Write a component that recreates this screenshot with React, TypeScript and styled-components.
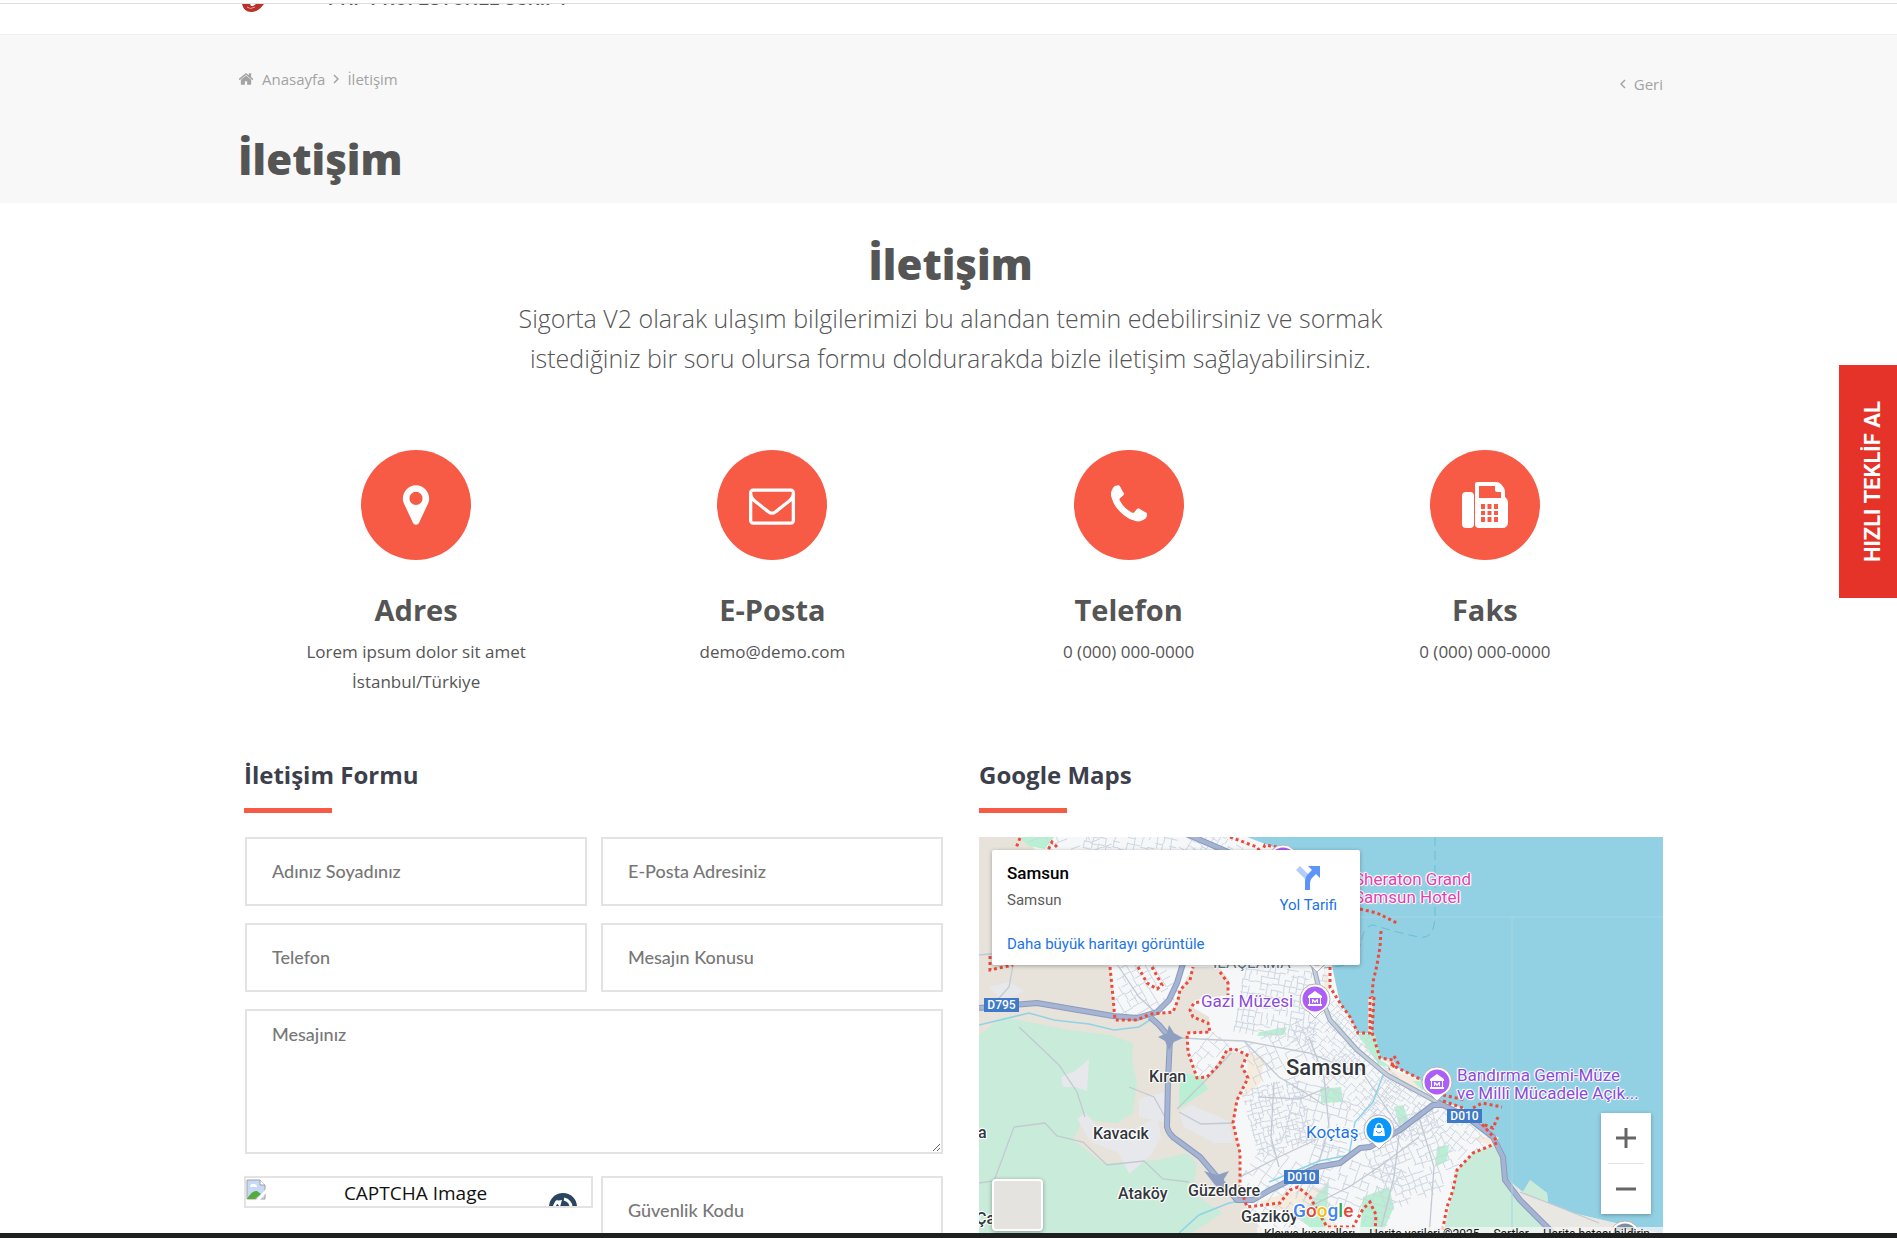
import React from 'react';
import styled, { createGlobalStyle } from 'styled-components';

const exo = `"Open Sans", "Noto Sans", sans-serif`;
const roboto = `Roboto, "Open Sans", sans-serif`;
const lato = `Lato, "Open Sans", sans-serif`;
const accent = '#f75b45';

const GlobalStyle = createGlobalStyle`
  *, *::before, *::after { box-sizing: border-box; }
  body { margin: 0; background: #fff; color: #555; font-family: ${exo}; }
  h1, h2, h3, p, ol, ul { margin: 0; padding: 0; }
  a { color: inherit; text-decoration: none; }
`;

const Shell = styled.div`
  display: flex;
  flex-direction: column;
  height: 100vh;
  overflow: hidden;
`;

const Page = styled.div`
  flex: 1;
  min-height: 0;
  overflow: hidden;
`;

const BottomBar = styled.footer`
  flex: none;
  height: 5px;
  background: #1e201f;
`;

const Container = styled.div`
  width: 100%;
  max-width: 1429px;
  margin: 0 auto;
  padding-left: 4px;
`;

/* Header */

const HeaderBar = styled.header`
  height: 35px;
  padding-top: 3px;
  border-bottom: 1px solid #efefef;
`;

const HeaderClip = styled.div`
  height: 12px;
  border-top: 1px solid #dedede;
  overflow: hidden;
`;

const Brand = styled.a`
  display: flex;
  align-items: flex-start;
  padding-left: 4px;
`;

const Slogan = styled.span`
  height: 2px;
  margin-left: 64px;
  overflow: hidden;
  display: flex;
  align-items: flex-end;
  color: #555;
  font: 500 19px/26px ${roboto};
  & > span { margin-bottom: -6px; }
`;

/* Title band */

const Band = styled.section`
  height: 168px;
  background: #f8f8f8;
`;

const BandTop = styled.div`
  display: flex;
  justify-content: space-between;
  padding-top: 32px;
  color: #a3a3a3;
  font-size: 15px;
  line-height: 24px;
`;

const Crumbs = styled.ol`
  display: flex;
  align-items: center;
  gap: 8px;
  height: 24px;
  list-style: none;
  li, a { display: flex; align-items: center; gap: 8px; }
`;

const Back = styled.a`
  display: flex;
  align-items: center;
  gap: 8px;
  padding-top: 5px;
`;

const BigTitle = styled.h1<{ $center?: boolean }>`
  color: #555;
  font-size: 42px;
  font-weight: 800;
  line-height: 60px;
  text-align: ${(p) => (p.$center ? 'center' : 'left')};
`;

const BandTitle = styled.div`
  padding-top: 33px;
`;

/* Intro */

const Intro = styled.section`
  padding-top: 31px;
  text-align: center;
`;

const Lead = styled.p`
  max-width: 940px;
  margin: 0 auto;
  padding-top: 4px;
  color: #555;
  font-size: 25px;
  font-weight: 300;
  line-height: 40px;
`;

const Contacts = styled.ul`
  display: grid;
  grid-template-columns: repeat(4, 1fr);
  padding-top: 72px;
  list-style: none;
`;

const Contact = styled.li`
  display: flex;
  flex-direction: column;
  align-items: center;
  min-height: 309px;
  text-align: center;
`;

const Disc = styled.span`
  display: grid;
  place-items: center;
  width: 110px;
  height: 110px;
  border-radius: 50%;
  background: ${accent};
  color: #fff;
`;

const ContactTitle = styled.h2`
  padding-top: 30px;
  font-size: 29px;
  font-weight: 700;
  line-height: 40px;
`;

const ContactText = styled.p`
  padding-top: 7px;
  font-size: 17px;
  line-height: 30px;
`;

/* Form and map */

const Columns = styled.div`
  display: grid;
  grid-template-columns: 705fr 684fr;
  gap: 36px;
`;

const FormColumn = styled.section`
  padding-left: 6px;
`;

const MapColumn = styled.section``;

const SectionTitle = styled.h2`
  margin-bottom: 24px;
  color: #3d3f4c;
  font-size: 24px;
  font-weight: 700;
  line-height: 32px;
  &::after {
    content: '';
    display: block;
    width: 88px;
    height: 5px;
    margin-top: 17px;
    background: ${accent};
  }
`;

const Form = styled.form`
  display: grid;
  grid-template-columns: 1fr 1fr;
  column-gap: 14px;
  row-gap: 17px;
  padding-left: 1px;
`;

const fieldStyle = `
  display: block;
  width: 100%;
  border: 2px solid #e3e3e3;
  border-radius: 0;
  background: #fff;
  color: #333;
  font-family: ${lato};
  font-size: 18px;
  font-weight: 500;
  outline: none;
  &::placeholder { color: #777; opacity: 1; }
`;

const Field = styled.input`
  ${fieldStyle}
  height: 69px;
  padding: 0 25px 2px;
`;

const Message = styled.textarea`
  ${fieldStyle}
  grid-column: 1 / -1;
  height: 145px;
  margin-bottom: 5px;
  padding: 10px 25px;
  line-height: 26px;
  resize: vertical;
`;

const Captcha = styled.div`
  display: flex;
  align-items: flex-start;
  justify-content: space-between;
  height: 32px;
  margin: 0 -6px 0 -1px;
  padding-right: 14px;
  border: 2px solid #e3e3e3;
  overflow: hidden;
  color: #111;
  font-size: 19px;
  line-height: 30px;
`;

const CaptchaText = styled.span`
  flex: 1;
  padding-left: 16px;
  text-align: center;
`;

const Refresh = styled.button`
  display: block;
  margin: 0;
  padding: 15px 0 0;
  border: 0;
  background: none;
`;

const MapFrame = styled.div`
  position: relative;
  height: 404px;
  overflow: hidden;
  background: #92d0e3;
  font-family: ${roboto};
`;

const MapDrawing = styled.svg`
  display: block;
  width: 100%;
  height: 404px;
`;

const halo = '1px 0 1px #fff, -1px 0 1px #fff, 0 1px 1px #fff, 0 -1px 1px #fff, 1px 1px 1px #fff, -1px -1px 1px #fff';

const Place = styled.span<{ $x: number; $y: number; $color?: string; $size?: number; $weight?: number }>`
  position: absolute;
  left: ${(p) => p.$x}px;
  top: ${(p) => p.$y}px;
  color: ${(p) => p.$color ?? '#33373c'};
  font-size: ${(p) => p.$size ?? 17}px;
  font-weight: ${(p) => p.$weight ?? 500};
  line-height: 18px;
  white-space: pre;
  text-shadow: ${halo};
`;

const Shield = styled.span<{ $x: number; $y: number }>`
  position: absolute;
  left: ${(p) => p.$x}px;
  top: ${(p) => p.$y}px;
  width: 35px;
  height: 14px;
  background: #3f7ac8;
  color: #fff;
  font-size: 12px;
  font-weight: 500;
  line-height: 14px;
  text-align: center;
`;

const GoogleMark = styled.a`
  position: absolute;
  left: 314px;
  top: 361px;
  font-size: 19px;
  font-weight: 500;
  line-height: 26px;
  text-shadow: ${halo};
  span:nth-child(3n + 1) { color: #4285f4; }
  span:nth-child(3n + 2) { color: #ea4335; }
  span:nth-child(3) { color: #fbbc05; }
  span:nth-child(5) { color: #34a853; }
  span:nth-child(6) { color: #ea4335; }
`;

const Attribution = styled.div`
  position: absolute;
  right: 0;
  bottom: 0;
  display: flex;
  gap: 14px;
  height: 14px;
  padding: 0 13px 0 7px;
  background: rgba(245, 245, 245, 0.75);
  color: #111;
  font-size: 12px;
  line-height: 15px;
  white-space: nowrap;
`;

const PlaceCard = styled.div`
  position: absolute;
  left: 13px;
  top: 13px;
  display: flex;
  justify-content: space-between;
  width: 368px;
  height: 115px;
  padding: 12px 23px 10px 15px;
  border-radius: 2px;
  background: #fff;
  box-shadow: 0 1px 4px rgba(0, 0, 0, 0.3);
  color: #5b5b5b;
  font-size: 15px;
  line-height: 22px;
`;

const CardText = styled.div`
  display: flex;
  flex-direction: column;
  a { margin-top: auto; }
`;

const CardTitle = styled.strong`
  margin-bottom: 5px;
  color: #000;
  font-size: 17px;
  font-weight: 500;
`;

const CardLink = styled.a`
  color: #1a73e8;
`;

const Directions = styled(CardLink)`
  display: flex;
  flex-direction: column;
  align-items: center;
  padding-top: 4px;
  gap: 4px;
`;

const ZoomControl = styled.div`
  position: absolute;
  right: 12px;
  top: 276px;
  width: 50px;
  height: 101px;
  padding: 0 7px;
  background: #fff;
  box-shadow: 0 1px 4px rgba(0, 0, 0, 0.3);
`;

const ZoomButton = styled.button`
  display: grid;
  place-items: center;
  width: 100%;
  height: 50px;
  padding: 0;
  border: 0;
  background: none;
  & + & { border-top: 1px solid #e2e2e2; }
`;

const LayerButton = styled.button`
  position: absolute;
  left: 13px;
  top: 342px;
  width: 51px;
  height: 52px;
  border: 2px solid #fff;
  border-radius: 4px;
  background: #e5e3df;
  box-shadow: 0 1px 4px rgba(0, 0, 0, 0.35);
`;

const QuoteTab = styled.button`
  position: fixed;
  right: 0;
  top: 365px;
  display: flex;
  align-items: center;
  justify-content: center;
  width: 58px;
  height: 233px;
  padding: 0 0 0 10px;
  border: 0;
  background: #e5332a;
  color: #fff;
  font: 700 22px/26px ${roboto};
  span { writing-mode: vertical-rl; transform: rotate(180deg); }
`;

/* Icons on the 1792-unit grid */

const glyphs = {
  home: 'M1472 992v480q0 26-19 45t-45 19h-384v-384h-256v384h-384q-26 0-45-19t-19-45v-480q0-1 .5-3t.5-3l575-474 575 474q1 2 1 6zm223-69l-62 74q-8 9-21 11h-3q-13 0-21-7l-692-577-692 577q-12 8-24 7-13-2-21-11l-62-74q-8-10-7-23.500t11-21.500l719-599q32-26 76-26t76 26l244 204v-195q0-14 9-23t23-9h192q14 0 23 9t9 23v408l219 182q10 8 11 21.500t-7 23.500z',
  marker: 'M1152 640q0-106-75-181t-181-75-181 75-75 181 75 181 181 75 181-75 75-181zm256 0q0 109-33 179l-364 774q-16 33-47.500 52t-67.500 19-67.500-19-46.500-52l-365-774q-33-70-33-179 0-212 150-362t362-150 362 150 150 362z',
  mail: 'M1664 1504v-768q-32 36-69 66-268 206-426 338-51 43-83 67t-86.500 48.500-102.500 24.500h-2q-48 0-102.500-24.500t-86.500-48.500-83-67q-158-132-426-338-37-30-69-66v768q0 13 9.500 22.500t22.500 9.500h1472q13 0 22.500-9.500t9.500-22.500zm0-1051v-24.500l-.5-13-3-12.500-5.500-9-9-7.500-14-2.500h-1472q-13 0-22.500 9.500t-9.500 22.500q0 168 147 284 193 152 401 317 6 5 35 29.500t46 37.500 44.500 31.500 50.500 27.500 43 9h2q20 0 43-9t50.500-27.500 44.500-31.500 46-37.500 35-29.500q208-165 401-317 54-43 100.500-115.500t46.500-131.500zm128-37v1088q0 66-47 113t-113 47h-1472q-66 0-113-47t-47-113v-1088q0-66 47-113t113-47h1472q66 0 113 47t47 113z',
  phone: 'M1600 1240q0 27-10 70.500t-21 68.500q-21 50-122 106-94 51-186 51-27 0-53-3.500t-57.500-12.500-47-14.500-55.500-20.500-49-18q-98-35-175-83-127-79-264-216t-216-264q-48-77-83-175-3-9-18-49t-20.500-55.500-14.500-47-12.500-57.500-3.500-53q0-92 51-186 56-101 106-122 25-11 68.500-21t70.500-10q14 0 21 3 18 6 53 76 11 19 30 54t35 63.500 31 53.500q3 4 17.500 25t21.500 35.500 7 28.500q0 20-28.500 50t-62 55-62 53-28.500 46q0 9 5 22.500t8.500 20.500 14 24 11.500 19q76 137 174 235t235 174q2 1 19 11.500t24 14 20.500 8.500 22.500 5q18 0 46-28.500t53-62 55-62 50-28.500q14 0 28.500 7t35.500 21.500 25 17.500q25 15 53.500 31t63.500 35 54 30q70 35 76 53 3 7 3 21z',
};

const Glyph = ({ name, size }: { name: keyof typeof glyphs; size: number }) => (
  <svg width={size} height={size} viewBox="0 0 1792 1792" fill="currentColor" aria-hidden="true">
    <path d={glyphs[name]} />
  </svg>
);

const FaxIcon = () => (
  <svg width="46" height="46" viewBox="0 0 46 46" fill="currentColor" aria-hidden="true">
    <rect x="0" y="10" width="12" height="36" rx="4" />
    <path
      fillRule="evenodd"
      d="M15 0h19q3 0 5 2l3 4q1 2 1 4v5q3 2 3 6v19q0 6-6 6H17q-4 0-4-4V2q0-2 2-2zM17 4v12h22v-6h-4q-2 0-2-2V4zM19 22v5h4v-5zM25.500 22v5h4v-5zM32 22v5h4v-5zM19 29v4h4v-4zM25.500 29v4h4v-4zM32 29v4h4v-4zM19 35v5h4v-5zM25.500 35v5h4v-5zM32 35v5h4v-5z"
    />
  </svg>
);

const Chevron = ({ left }: { left?: boolean }) => (
  <svg width="6" height="10" viewBox="0 0 6 10" fill="none" stroke="currentColor" strokeWidth="1.5" aria-hidden="true">
    <path d={left ? 'M5 1L1 5l4 4' : 'M1 1l4 4-4 4'} />
  </svg>
);

const LogoTail = () => (
  <svg width="22" height="9" viewBox="0 0 22 9" aria-hidden="true">
    <path d="M0 0h8l1 2h2l3-2h8q-3 4-6 6-3 2-7 2Q2 8 0 0z" fill="#b9312b" />
    <path d="M5 3Q8 6 13 3" fill="none" stroke="#e9a29c" />
  </svg>
);

const BrokenImage = () => (
  <svg width="20" height="22" viewBox="0 0 20 22" aria-hidden="true">
    <path d="M1 2h13l5 5v14H1z" fill="#c6d9f7" stroke="#a2a2a2" />
    <path d="M1 21q5-9 10-8l4 3-6 5z" fill="#57ab3b" />
    <path d="M4 8q1-3 4-2 3 0 3 3H4z" fill="#fff" />
    <path d="M14 2v5h5" fill="#fff" stroke="#a2a2a2" />
    <path d="M10 22L20 11v4l-6 7z" fill="#fff" />
  </svg>
);

const RefreshIcon = () => (
  <svg width="28" height="28" viewBox="0 0 28 28" aria-hidden="true">
    <circle cx="14" cy="14" r="14" fill="#2b4560" />
    <path d="M6 18A8.500 8.500 0 0 1 9 8M15 6a8.500 8.500 0 0 1 7 9" fill="none" stroke="#fff" strokeWidth="3" />
    <path d="M6 8l7-1-2 7zM18 16h8l-4 5z" fill="#fff" />
  </svg>
);

/* Map */

const coast =
  'M268 0L280 10L300 12L330 60L351 110L351 150L361 166L371 180L379 196H389V160H394L393 195L401 221L414 223L419 231L441 243L458 263L484 271L501 286L518 300L523 316L526 340L544 355L551 343L568 356L569 366L594 376L631 385L684 397';
const city =
  'M45 0H268L300 12L351 120L361 166L379 196L394 196L401 221L441 243L458 263L484 271L518 300L520 306L494 316L478 333L474 353L463 404H290L268 370L261 350L261 316L254 286L258 263L269 241L263 230L268 218L248 213L228 240L218 241L209 220L208 196L231 196L230 180L213 170L216 163L249 158L250 143L240 130H214L201 153L194 175L171 177L136 183L131 130L80 40Z';

const limits = [
  'M41 1L37 11M78 10L73 5L69 13M251 0L278 10L282 16L286 8L310 12L312 18',
  'M11 119V133L34 128M159 130L168 146L178 152L183 148L173 130',
  'M131 130L134 160L136 183L158 183L171 177L194 175L199 163L201 153L211 143L214 130',
  'M241 135L249 146L249 158M226 164L215 166L211 173L214 180L229 186L231 195L208 196L209 215L218 241L228 240L240 228L248 213L256 212L268 218L263 230L269 241L258 263L254 286L261 316L261 350L268 370L301 366L311 353L319 350L331 360L340 376L348 390L374 390L384 372L391 365L397 378L396 396',
  'M351 130V150L361 166L371 180L379 196H391V160M395 160L393 195L401 221L414 223L413 228L419 231L441 242',
  'M402 94L401 110L398 128L394 145L393 160M381 72L398 76L418 86M415 219L419 226L410 232',
  'M464 258L486 263M464 264L484 271M494 271L503 266L523 270M519 280L514 291L503 287L518 304M518 306L494 316L478 333L474 353L468 370L463 396',
];

const highways = [
  'M0 171L58 166L134 179L158 181L178 175L190 163L198 146L206 120',
  'M171 180L180 188L191 201L189 243L188 290Q190 298 198 303L221 320L238 340L258 363H274L291 353L338 330L361 326L381 311L391 310L421 293L454 268H466',
  'M205 -4L270 24',
  'M458 265L488 280L514 300L524 320L526 343L541 363L582 404',
];

const boulevard = 'M330 110L342 160L351 183L378 213L408 238L458 265';

const lanes =
  'M0 346L15 344L35 290L66 286L78 299L104 305L128 328L165 324L184 342L210 345M40 190L80 228L98 255L106 280M198 272L230 240L252 216M203 201L240 203L265 204L300 240L325 255L345 268M200 275L222 287L255 286M261 340L300 320L330 306L360 290M140 130L160 160L176 175M265 204L330 216L370 232M300 400L330 370L370 350L400 330L440 300M330 200L345 240L350 290L340 325M295 245L292 300L300 330M280 260L320 262L350 250M0 118L35 115L75 100M34 128L30 150L12 170M150 250L175 260L186 280M376 225L400 260L420 290M420 298L415 340L400 400M440 280L455 330L450 400M541 355L580 370L620 386';

type District = [number, number, number, number, number, number];
const districts: District[] = [
  [150, 10, 90, 50, 12, 7], [235, 10, 60, 40, 30, 6], [95, 20, 80, 60, -20, 10], [160, 145, 60, 60, 60, 8],
  [300, 165, 80, 70, 10, 6], [300, 215, 70, 40, -25, 8], [355, 205, 60, 60, 45, 5], [380, 245, 70, 60, 42, 6],
  [340, 280, 60, 60, 15, 8], [300, 280, 60, 70, -15, 5], [420, 275, 70, 50, 35, 5], [430, 320, 80, 80, -20, 7],
  [370, 345, 90, 60, 20, 8], [300, 355, 80, 70, 35, 9], [480, 295, 50, 40, 40, 7], [240, 225, 50, 40, 40, 9],
];

const streetPath = ([cx, cy, w, h, angle, step]: District, seed: number) => {
  let state = seed * 7919 + 17;
  const rand = () => {
    state = (state * 16807) % 2147483647;
    return state / 2147483647;
  };
  const cos = Math.cos((angle * Math.PI) / 180);
  const sin = Math.sin((angle * Math.PI) / 180);
  const at = (x: number, y: number) =>
    `${(cx + x * cos - y * sin).toFixed(1)} ${(cy + x * sin + y * cos).toFixed(1)}`;
  let d = '';
  for (let x = -w / 2; x < w / 2; x += step) {
    for (let y = -h / 2; y < h / 2; y += step) {
      const j = rand() * 2;
      if (rand() > 0.3) d += `M${at(x, y + j)}L${at(x + step, y + j)}`;
      if (rand() > 0.3) d += `M${at(x + j, y)}L${at(x + j, y + step)}`;
    }
  }
  return d;
};

const streets = districts.map(streetPath).join('');

const Pin = ({ x, y, color, bag }: { x: number; y: number; color: string; bag?: boolean }) => (
  <g transform={`translate(${x} ${y})`}>
    <path d="M0 19Q-3 16-6 13Q-15 9-15 0A15 15 0 0 1 15 0Q15 9 6 13Q3 16 0 19z" fill="#fff" stroke="#b9b4ba" />
    <circle r="12.500" fill={color} />
    {bag ? (
      <>
        <path d="M-5-2H5L6 6H-6z" fill="#fff" />
        <path d="M-3-2V-4Q0-9 3-4V-2" fill="none" stroke="#fff" strokeWidth="1.500" />
        <path d="M-3 1Q0 5 3 1" fill="none" stroke={color} />
      </>
    ) : (
      <path d="M-7-3L0-8L7-3V-1H6V5H7V7H-7V5H-6V-1H-7zM-5-1V5H5V-1zM-3 4V0H-2L0 2L2 0H3V4H2V2L0 4L-2 2V4z" fill="#fff" fillRule="evenodd" />
    )}
  </g>
);

const SamsunMap = () => (
  <MapDrawing viewBox="0 0 684 404" preserveAspectRatio="xMinYMin slice" role="img" aria-label="Samsun haritası">
    <defs>
      <clipPath id="cityArea"><path d={city} /></clipPath>
    </defs>
    <rect width="2000" height="404" fill="#92d0e3" />
    <path d={`${coast}V404H0V0Z`} fill="#e7e3db" />
    <path d="M41 0L54 10L76 4V0ZM0 198L24 180L91 193L131 198L154 206L153 223L158 246L154 276L138 286L104 283L94 303L124 326L178 323L208 316L218 326L214 356L244 376L200 404H0Z" fill="#c9ebd9" />
    <path d="M82 240L96 234L110 222L108 254L96 250L84 250ZM98 282L106 276L120 290L155 292L178 280L182 300L172 318L150 337L140 316L112 305ZM10 150L30 145L45 154L25 165ZM160 262L186 255V285L160 280ZM200 275L212 268L250 284L254 306L235 306L205 290Z" fill="#e7e8ec" />
    <path d={city} fill="#f6f7f8" />
    <path d="M40 0H75L66 12L50 9Z" fill="#b9efd2" />
    <path d="M268 216L285 220L282 245L263 262L269 241ZM405 230L441 243L440 254L415 245ZM361 400L280 365L310 355L345 350ZM490 300L520 300L515 310ZM345 130L352 150L345 160Z" fill="#f5ecdd" />
    <path d="M201 235L222 240L229 252L200 272ZM342 252L362 250L364 265L342 266ZM415 270L424 268L430 284L420 288ZM378 197L396 197L402 223L414 231L400 228ZM280 195L308 190L305 198L278 199ZM355 180L378 212L370 210ZM458 310L470 308L468 324L456 330ZM384 360L410 350L415 370L400 404H380ZM320 380L350 345L345 404ZM434 244L444 244V254Z" fill="#b9efd2" />
    <path d="M520 306L494 316L478 333L474 353L463 404H600L545 365L527 345L524 320ZM544 355L551 343L568 356L569 366Z" fill="#c9ebd9" />
    <path d="M526 343L544 355L594 376L684 397V404H590L541 363Z" fill="#e9e7e2" />
    <g clipPath="url(#cityArea)">
      <path d={streets} fill="none" stroke="#cdd6e1" strokeWidth="1" />
    </g>
    <path d={lanes} fill="none" stroke="#c3c9d3" strokeWidth="1.300" />
    <path d="M0 188L50 176L75 183L110 187L135 193L160 190L171 183M404 238L394 265L376 285L370 318L340 324L290 345M200 396L220 378L250 366L262 364" fill="none" stroke="#8fd3e6" strokeWidth="1.500" />
    <path d={boulevard} fill="none" stroke="#9aa7bd" strokeWidth="5" />
    <path d={boulevard} fill="none" stroke="#c5cedb" strokeWidth="3" />
    {highways.map((d) => <path key={d} d={d} fill="none" stroke="#8b9bbd" strokeWidth="6" strokeLinejoin="round" />)}
    {highways.map((d) => <path key={d} d={d} fill="none" stroke="#a5b4d2" strokeWidth="4" strokeLinejoin="round" />)}
    <path d="M179 200L188 196L190 188L195 196L204 201L195 205L190 213L186 204ZM225 334L238 338L250 334L245 342L246 356L236 348Z" fill="#8f9fc1" />
    <path d="M456 0V80Q455 103 440 100Q420 96 394 88Q388 88 384 98Q378 124 368 128L345 131" fill="none" stroke="#6bbdd8" strokeDasharray="9 5" />
    <path d="M381 80H2000M533 80V404" stroke="#a5d7e5" />
    {limits.map((d) => <path key={d} d={d} fill="none" stroke="#ee4a3c" strokeWidth="3" strokeDasharray="3 3" />)}
    <Pin x={304} y={23} color="#a85cf5" />
    <Pin x={338} y={116} color="#7b8794" />
    <Pin x={336} y={162} color="#ab5ff7" />
    <Pin x={458} y={245} color="#ab5ff7" />
    <Pin x={400} y={293} color="#0a96fb" bag />
    <Pin x={646} y={399} color="#7d8f9c" />
  </MapDrawing>
);

const contacts = [
  { title: 'Adres', lines: ['Lorem ipsum dolor sit amet', 'İstanbul/Türkiye'], icon: <Glyph name="marker" size={46} /> },
  { title: 'E-Posta', lines: ['demo@demo.com'], icon: <Glyph name="mail" size={46} /> },
  { title: 'Telefon', lines: ['0 (000) 000-0000'], icon: <Glyph name="phone" size={46} /> },
  { title: 'Faks', lines: ['0 (000) 000-0000'], icon: <FaxIcon /> },
];

const purple = '#8a4bdc';

export default function App() {
  return (
    <Shell>
      <GlobalStyle />
      <Page>
        <HeaderBar>
          <HeaderClip>
            <Container>
              <Brand href="#">
                <LogoTail />
                <Slogan><span>PHP PROFESYONEL SCRIPT</span></Slogan>
              </Brand>
            </Container>
          </HeaderClip>
        </HeaderBar>

        <Band>
          <Container>
            <BandTop>
              <nav>
                <Crumbs>
                  <li><a href="#"><Glyph name="home" size={16} />Anasayfa</a></li>
                  <li><Chevron />İletişim</li>
                </Crumbs>
              </nav>
              <Back href="#"><Chevron left />Geri</Back>
            </BandTop>
            <BandTitle><BigTitle>İletişim</BigTitle></BandTitle>
          </Container>
        </Band>

        <Container>
          <Intro>
            <BigTitle as="h2" $center>İletişim</BigTitle>
            <Lead>
              Sigorta V2 olarak ulaşım bilgilerimizi bu alandan temin edebilirsiniz ve sormak<br />
              istediğiniz bir soru olursa formu doldurarakda bizle iletişim sağlayabilirsiniz.
            </Lead>
          </Intro>

          <Contacts>
            {contacts.map((c) => (
              <Contact key={c.title}>
                <Disc>{c.icon}</Disc>
                <ContactTitle>{c.title}</ContactTitle>
                <ContactText>
                  {c.lines.map((line, i) => (
                    <React.Fragment key={line}>{i > 0 && <br />}{line}</React.Fragment>
                  ))}
                </ContactText>
              </Contact>
            ))}
          </Contacts>

          <Columns>
            <FormColumn>
              <SectionTitle>İletişim Formu</SectionTitle>
              <Form>
                <Field aria-label="Adınız Soyadınız" placeholder="Adınız Soyadınız" />
                <Field type="email" aria-label="E-Posta Adresiniz" placeholder="E-Posta Adresiniz" />
                <Field type="tel" aria-label="Telefon" placeholder="Telefon" />
                <Field aria-label="Mesajın Konusu" placeholder="Mesajın Konusu" />
                <Message aria-label="Mesajınız" placeholder="Mesajınız" />
                <Captcha>
                  <BrokenImage />
                  <CaptchaText>CAPTCHA Image</CaptchaText>
                  <Refresh type="button" aria-label="Kodu yenile"><RefreshIcon /></Refresh>
                </Captcha>
                <Field aria-label="Güvenlik Kodu" placeholder="Güvenlik Kodu" />
              </Form>
            </FormColumn>

            <MapColumn>
              <SectionTitle>Google Maps</SectionTitle>
              <MapFrame>
                <SamsunMap />
                <Place $x={375} $y={33} $color="#e43fb4" $weight={400}>{'Sheraton Grand\nSamsun Hotel'}</Place>
                <Place $x={234} $y={117} $color="#5d7686" $size={16} $weight={400}>İLAÇLAMA</Place>
                <Place $x={222} $y={155} $color={purple} $weight={400}>Gazi Müzesi</Place>
                <Place $x={170} $y={231} $size={16}>Kıran</Place>
                <Place $x={307} $y={222} $size={22}>Samsun</Place>
                <Place $x={114} $y={288} $size={16}>Kavacık</Place>
                <Place $x={139} $y={348} $size={16}>Ataköy</Place>
                <Place $x={209} $y={345} $size={16}>Güzeldere</Place>
                <Place $x={262} $y={371} $size={16}>Gaziköy</Place>
                <Place $x={-1} $y={287} $size={16}>a</Place>
                <Place $x={-3} $y={373} $size={16}>Ça</Place>
                <Place $x={327} $y={286} $color="#1a73e8" $weight={400}>Koçtaş</Place>
                <Place $x={478} $y={229} $color={purple} $weight={400}>{'Bandırma Gemi-Müze\nve Millî Mücadele Açık...'}</Place>
                <Shield $x={5} $y={161}>D795</Shield>
                <Shield $x={305} $y={333}>D010</Shield>
                <Shield $x={468} $y={272}>D010</Shield>
                <GoogleMark href="#" aria-label="Google">
                  <span>G</span><span>o</span><span>o</span><span>g</span><span>l</span><span>e</span>
                </GoogleMark>
                <Attribution>
                  <span>Klavye kısayolları</span>
                  <span>Harita verileri ©2025</span>
                  <span>Şartlar</span>
                  <span>Harita hatası bildirin</span>
                </Attribution>
                <LayerButton type="button" aria-label="Uydu görüntüsü" />
                <ZoomControl>
                  <ZoomButton type="button" aria-label="Yakınlaştır">
                    <svg width="20" height="20" viewBox="0 0 20 20"><path d="M0 10H20M10 0V20" stroke="#666" strokeWidth="3" /></svg>
                  </ZoomButton>
                  <ZoomButton type="button" aria-label="Uzaklaştır">
                    <svg width="20" height="20" viewBox="0 0 20 20"><path d="M0 10H20" stroke="#666" strokeWidth="3" /></svg>
                  </ZoomButton>
                </ZoomControl>
                <PlaceCard>
                  <CardText>
                    <CardTitle>Samsun</CardTitle>
                    <span>Samsun</span>
                    <CardLink href="#">Daha büyük haritayı görüntüle</CardLink>
                  </CardText>
                  <Directions href="#">
                    <svg width="24" height="24" viewBox="0 0 24 24" aria-hidden="true">
                      <path d="M0 4L4 0L13 9L9 13z" fill="#b3cdfb" />
                      <path d="M9 24V16Q9 11 12 8L16 4L12 0H24V12L20 8L16 12Q14 14 14 17V24z" fill="#5e93f8" />
                    </svg>
                    Yol Tarifi
                  </Directions>
                </PlaceCard>
              </MapFrame>
            </MapColumn>
          </Columns>
        </Container>
      </Page>
      <BottomBar />
      <QuoteTab type="button"><span>HIZLI TEKLİF AL</span></QuoteTab>
    </Shell>
  );
}
